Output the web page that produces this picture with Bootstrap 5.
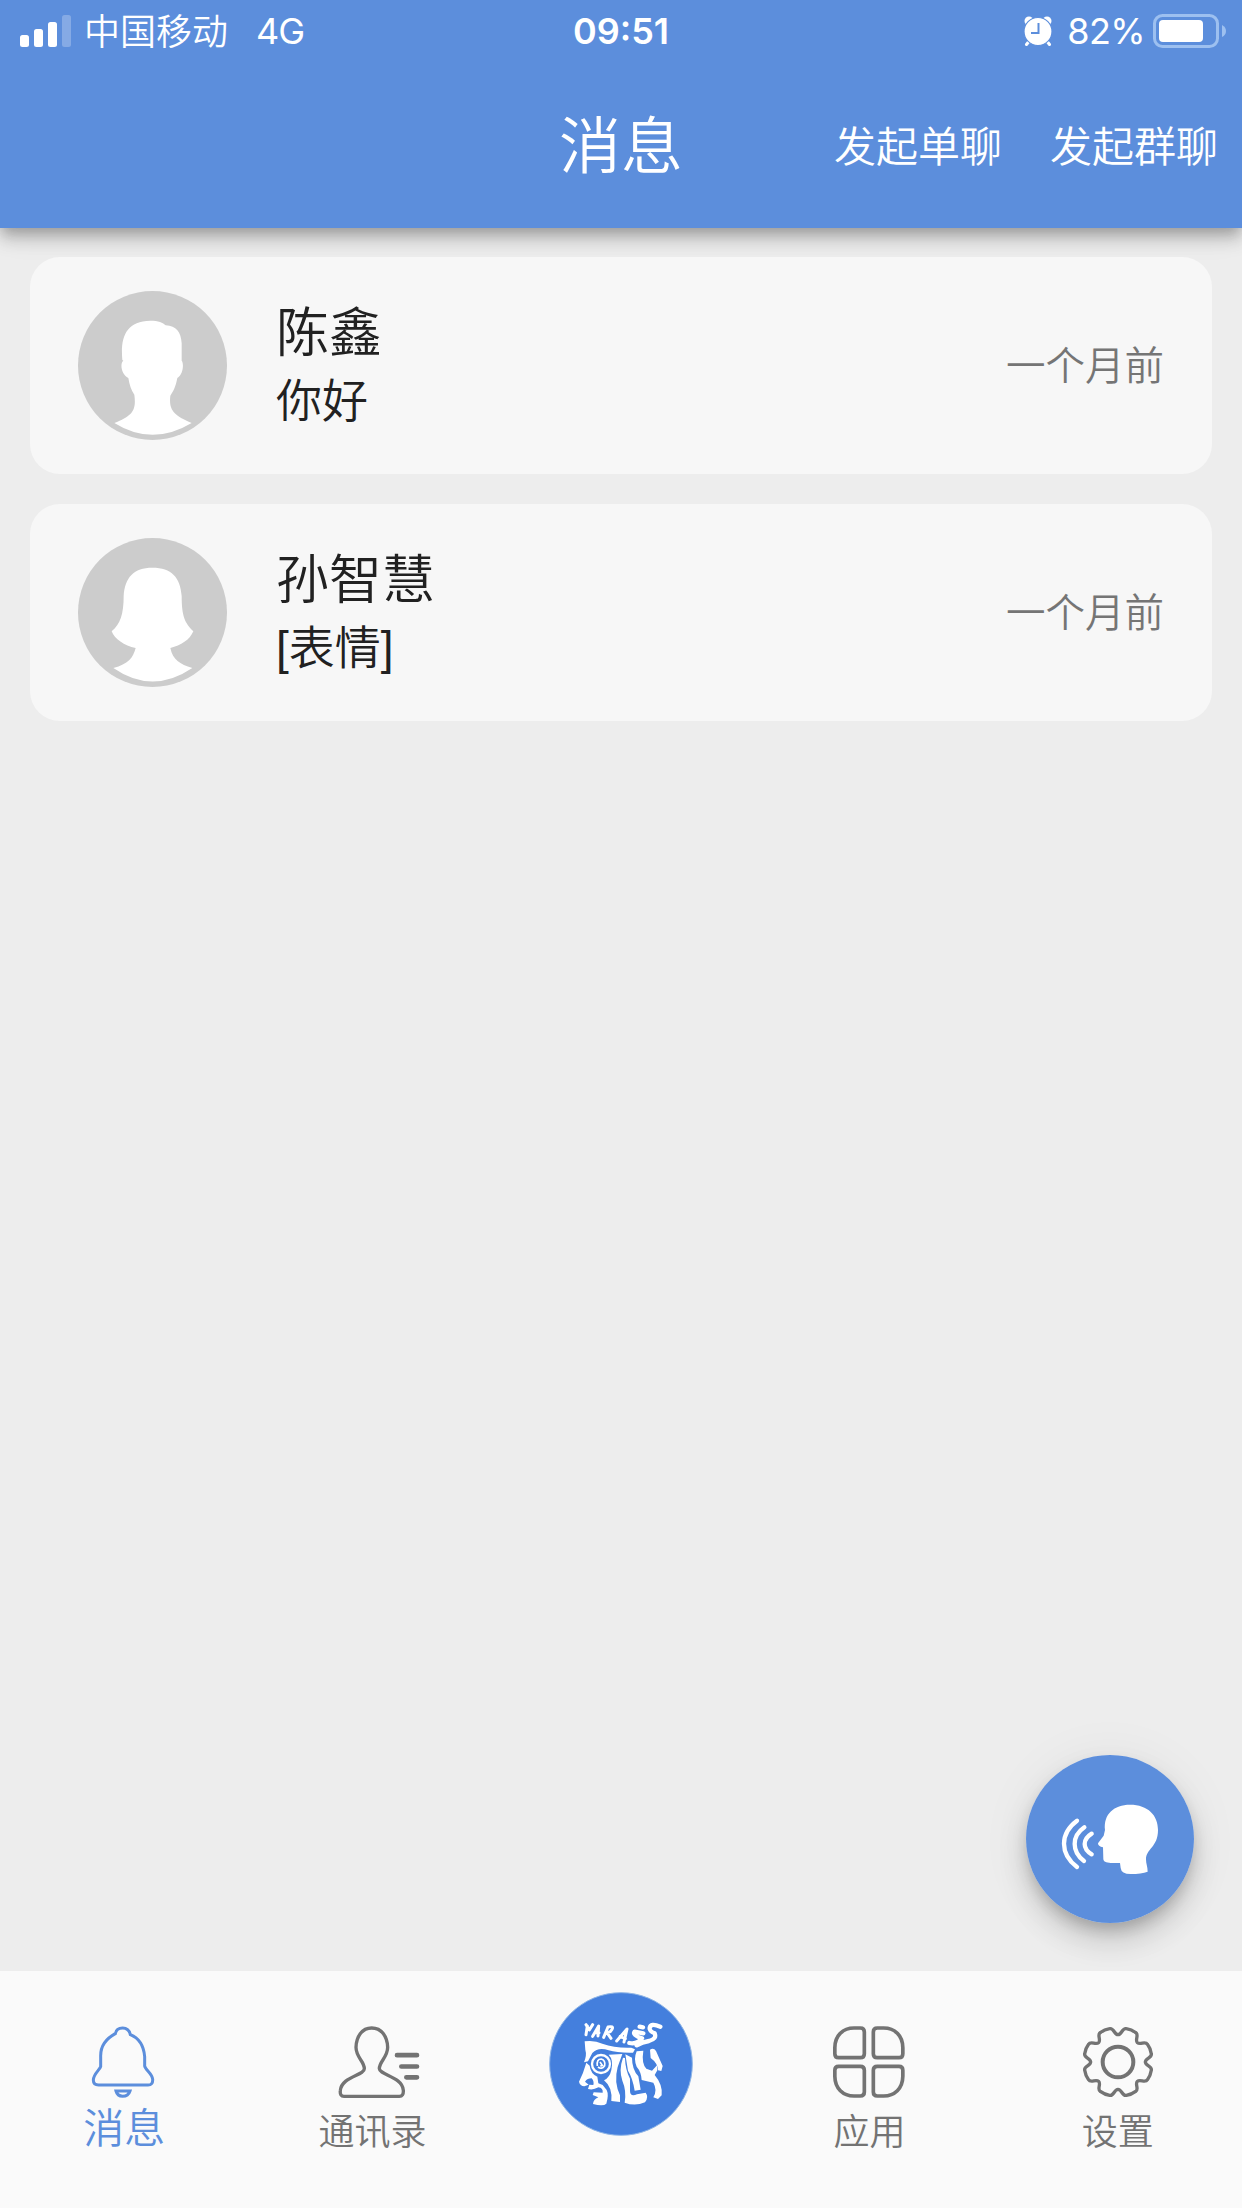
<!DOCTYPE html>
<html lang="zh-CN">
<head>
  <meta charset="UTF-8" />
  <meta name="viewport" content="width=device-width, initial-scale=1.0"/>
  <title>消息</title>
  <link rel="stylesheet" href="https://cdn.jsdelivr.net/npm/bootstrap@5.3.0/dist/css/bootstrap.min.css" />
  <style>
    body {
      font-family: Inter, "Noto Sans CJK SC", sans-serif;
      font-weight: 350;
      background: #ededed;
      color: #212121;
      line-height: 1;
    }
    svg { display: block; flex: none; }

    .app-header {
      height: 228px;
      background: #5c8edc;
      box-shadow: 0 6px 12px -3px rgba(0,0,0,.2), 0 12px 15px rgba(0,0,0,.14), 0 3px 30px rgba(0,0,0,.12);
    }
    .status-bar { height: 62px; padding: 0 15px 0 20px; font-size: 36px; }
    .carrier { margin-left: 13px; padding-top: 2px; }
    .network { margin-left: 28px; font-weight: 400; letter-spacing: -1px; }
    .clock { margin-right: 5px; font-weight: 600; }
    .charge { margin: 0 8px 0 15px; font-weight: 400; letter-spacing: -.6px; }
    .title-bar { height: 166px; padding: 3px 24px 0; }
    .title-text { font-size: 62px; font-weight: 350; line-height: 70px; }
    .action-link { font-size: 42px; }
    .action-group { gap: 48px; }

    .chat-list { padding: 29px 30px; gap: 30px; }
    .chat-card { height: 217px; padding: 0 48px; border: 0; border-radius: 30px; background: #f7f7f7; }
    .chat-text { margin-left: 49px; padding-top: 3px; }
    .chat-name { font-size: 53px; line-height: 68px; }
    .chat-last { font-family: "Liberation Sans", "Noto Sans CJK SC", sans-serif; font-size: 46px; line-height: 68px; }
    .chat-time { padding-top: 3px; font-size: 39.5px; color: #757575; }

    .tab-bar { height: 237px; background: #fafafa; }
    .tab-link { padding-top: 55px; color: #737373; font-size: 36px; }
    .tab-link:hover { color: #737373; }
    .tab-label { margin-top: 16px; line-height: 36px; }
    .tab-link.active { color: #5c8edc; }
    .tab-link.active .tab-label { margin-top: 8px; font-size: 41px; line-height: 44px; }
    .tab-link.active svg { margin-right: 2px; }
    .contacts-icon { margin-left: 13px; }
    .tab-link.tab-logo { padding-top: 21px; }

    .voice-btn {
      right: 48px;
      bottom: 285px;
      border-radius: 50%;
      box-shadow: 0 9px 15px -3px rgba(0,0,0,.2), 0 18px 30px rgba(0,0,0,.14), 0 3px 54px rgba(0,0,0,.06);
    }
  </style>
</head>
<body>
  <div class="d-flex flex-column vh-100 position-relative overflow-hidden">
    <header class="app-header text-white">
      <div class="status-bar d-flex align-items-center">
        <div class="d-flex align-items-center flex-fill w-25">
          <svg width="51" height="32" viewBox="0 0 51 32" fill="#fff">
            <rect x="0" y="20" width="9" height="12" rx="2.5"/>
            <rect x="14" y="14" width="9" height="18" rx="2.5"/>
            <rect x="28" y="7" width="9" height="25" rx="2.5"/>
            <rect x="42" y="0" width="9" height="32" rx="2.5" opacity=".25"/>
          </svg>
          <span class="carrier">中国移动</span>
          <span class="network">4G</span>
        </div>
        <span class="clock">09:51</span>
        <div class="d-flex align-items-center justify-content-end flex-fill w-25">
          <svg width="28" height="30" viewBox="0 0 28 30">
            <circle cx="5" cy="5" r="4.5" fill="#fff"/>
            <circle cx="23" cy="5" r="4.5" fill="#fff"/>
            <path d="M6 24L2.500 28.500M22 24l3.500 4.500" stroke="#fff" stroke-width="3" stroke-linecap="round"/>
            <circle cx="14" cy="15.5" r="14" fill="#fff" stroke="#5c8edc" stroke-width="1.2"/>
            <path d="M14.500 7v10H7" fill="none" stroke="#5c8edc" stroke-width="2"/>
          </svg>
          <span class="charge">82%</span>
          <svg width="74" height="34" viewBox="0 0 74 34">
            <rect x="1.500" y="1.500" width="63" height="31" rx="8" fill="none" stroke="#9dc0f0" stroke-width="3"/>
            <rect x="6" y="6" width="44" height="22" rx="4" fill="#fff"/>
            <path d="M69 11q4 2 4 6t-4 6z" fill="#9dc0f0"/>
          </svg>
        </div>
      </div>
      <div class="title-bar d-flex align-items-center">
        <div class="flex-fill w-25"></div>
        <h1 class="title-text m-0">消息</h1>
        <div class="action-group d-flex justify-content-end flex-fill w-25">
          <span class="action-link text-nowrap">发起单聊</span>
          <span class="action-link text-nowrap">发起群聊</span>
        </div>
      </div>
    </header>

    <main class="chat-list d-flex flex-column flex-fill">
      <div class="chat-card card flex-row align-items-center">
        <svg width="149" height="149" viewBox="175 123 447 447">
          <circle cx="398.500" cy="346.500" r="223.500" fill="#ccc"/>
          <path d="M308 330C302 262 318 214 392 212C416 212 430 218 438 226C470 228 484 246 486 280L486 332C493 340 491 374 473 384C468 410 462 422 452 437C447 480 462 495 516 519Q398 590 284 519C340 497 350 480 344 434C334 420 330 405 326 384C305 374 300 340 311 332Z" fill="#fff"/>
        </svg>
        <div class="chat-text flex-fill">
          <div class="chat-name">陈鑫</div>
          <div class="chat-last">你好</div>
        </div>
        <div class="chat-time">一个月前</div>
      </div>
      <div class="chat-card card flex-row align-items-center">
        <svg width="149" height="149" viewBox="175 126 447 447">
          <circle cx="398.500" cy="349.500" r="223.500" fill="#ccc"/>
          <path d="M398 215C456 215 482 244 486 300C486 362 496 381 521 406C510 432 484 448 452 456C460 492 480 504 518 516Q398 597 281 516C326 504 340 486 348 456C314 450 284 428 276 406C302 384 312 354 312 300C316 244 342 215 398 215Z" fill="#fff"/>
        </svg>
        <div class="chat-text flex-fill">
          <div class="chat-name">孙智慧</div>
          <div class="chat-last">[表情]</div>
        </div>
        <div class="chat-time">一个月前</div>
      </div>
    </main>

    <nav class="tab-bar d-flex">
      <a href="#" class="tab-link active col d-flex flex-column align-items-center text-decoration-none">
        <svg width="64" height="72" viewBox="123 196 192 216" fill="none" stroke="currentColor" stroke-width="9">
          <path d="M218 202C205 202 198 208 196 219C172 232 152 250 152 285V318C150 326 130 341 130 358Q130 373 146 373H294Q309 373 308 356C307 339 286 328 284 316V288C281 252 266 232 241 222C238 208 231 202 218 202Z"/>
          <path d="M198 391H240Q235 407 218 407Q202 406 198 391Z"/>
        </svg>
        <span class="tab-label">消息</span>
      </a>
      <a href="#" class="tab-link col d-flex flex-column align-items-center text-decoration-none">
        <svg class="contacts-icon" width="82" height="72" viewBox="864 196 246 216" fill="none" stroke="currentColor" stroke-width="10" stroke-linecap="round">
          <path d="M965 202C935 202 919 229 918 260C918 290 943 302 943 324C943 344 874 348 871 390Q869 407 882 407H1048Q1061 407 1060 389C1057 348 989 343 988 324C988 302 1013 290 1013 260C1012 229 996 202 965 202Z"/>
          <path d="M1041 283.500H1101M1054 317.500H1101M1069 350H1101" stroke-width="14"/>
        </svg>
        <span class="tab-label">通讯录</span>
      </a>
      <a href="#" class="tab-link tab-logo col d-flex flex-column align-items-center text-decoration-none">
        <svg width="144" height="144" viewBox="57 66 432 432">
          <circle cx="273" cy="282" r="214" fill="#447fdd" stroke="#8eb5e6" stroke-width="3"/>
          <!-- headdress -->
          <g fill="none" stroke="#fff" stroke-width="9" stroke-linecap="round" stroke-linejoin="round">
            <path d="M168 164L178 180L188 164M172 168L168 194M188 199L206 168L204 198M194 188H207"/>
            <path d="M221 202L234 171Q252 167 246 178Q242 187 231 188L243 205"/>
            <path d="M260 213L291 177L282 216M270 200L286 206"/>
            <path d="M298 219Q322 224 336 205Q306 195 314 185L340 190M329 170L339 172M391 170Q361 158 359 174Q358 183 374 190Q381 207 357 213Q336 216 320 226" stroke-width="13"/>
          </g>
          <!-- face -->
          <g fill="#fff">
            <path d="M164 214Q194 210 217 221Q256 235 304 233L315 238L309 248Q262 249 236 241Q205 230 187 249L174 274L162 277Q171 255 166 240Z"/>
            <path d="M169 278Q160 310 147 335Q150 348 163 349L176 344L165 335Q172 325 185 325Q193 334 190 345L178 344L174 357Q190 361 205 352Q220 354 218 368L191 367L188 375L205 382Q190 388 189 402Q220 410 229 401Q237 374 230 360L218 345L205 340L202 320Q182 311 179 287Z"/>
            <path d="M236 254Q251 269 244 300Q239 323 222 331Q248 352 244 393L270 396V376Q251 336 263 291L277 252Z"/>
            <path d="M279 263Q266 299 277 332Q290 362 284 398Q315 410 345 397Q357 381 347 368L321 373Q301 382 300 363V326Q286 300 285 264Z"/>
            <path d="M286 253L306 263Q306 298 325 319L332 359L314 362Q308 324 294 302Z"/>
            <path d="M320 244L340 242Q334 280 349 296L366 302L381 286L382 301L374 315Q399 345 395 376L384 387L370 382Q383 360 370 338L335 330Q334 306 320 290Q310 267 320 244Z"/>
            <path d="M360 239Q371 232 378 243L398 288L394 303L384 301Q383 279 362 264Z"/>
          </g>
          <g fill="none" stroke="#fff">
            <circle cx="213" cy="282" r="27" stroke-width="7"/>
            <path d="M202 288Q199 267 214 267Q227 271 224 287Q215 300 204 291M210 276L217 286L211 289" stroke-width="5"/>
          </g>
        </svg>
      </a>
      <a href="#" class="tab-link col d-flex flex-column align-items-center text-decoration-none">
        <svg width="72" height="72" viewBox="102 166 216 216" fill="none" stroke="currentColor" stroke-width="11">
          <path id="petal" d="M107.500 231C108 194 132 172 165 172H184Q196 172 196 184V249Q196 261 184 261H119Q107.500 261 107.500 249Z"/>
          <use href="#petal" transform="matrix(-1 0 0 1 419 0)"/>
          <use href="#petal" transform="matrix(1 0 0 -1 0 548)"/>
          <use href="#petal" transform="matrix(-1 0 0 -1 419 548)"/>
        </svg>
        <span class="tab-label">应用</span>
      </a>
      <a href="#" class="tab-link col d-flex flex-column align-items-center text-decoration-none">
        <svg width="72" height="72" viewBox="-108 -108 216 216" fill="none" stroke="currentColor" stroke-width="10">
          <circle r="46" stroke-width="12"/>
          <path id="cog" stroke-linejoin="round"/>
        </svg>
        <span class="tab-label">设置</span>
      </a>
    </nav>

    <button type="button" class="voice-btn position-absolute border-0 p-0">
      <svg width="168" height="168" viewBox="138 105 504 504">
        <circle cx="390" cy="357" r="252" fill="#5c8edc"/>
        <path d="M375 330C370 282 402 254 450 254C504 254 534 286 534 330C534 382 498 386 498 418C498 432 503 440 503 455Q484 462 452 462Q424 462 422 444L420 429C400 428 372 433 370 418L369 382Q354 379 354 370L371 347Z" fill="#fff"/>
        <path d="M291 302Q252 331 252 371T291 441M313 322Q284 342 284 372T312 423M335 341Q314 354 314 372T335 403" fill="none" stroke="#fff" stroke-width="13" stroke-linecap="round"/>
      </svg>
    </button>
  </div>

  <script>
    const point = (r, deg) => {
      const a = deg * Math.PI / 180;
      return `${(r * Math.sin(a)).toFixed(1)} ${(-r * Math.cos(a)).toFixed(1)}`;
    };

    // eight teeth, one notch between each pair
    let d = `M${point(82, 0)}`;
    for (let t = 0; t < 360; t += 45) {
      d += `C${point(83, t + 8)} ${point(104, t + 7)} ${point(103, t + 14)}`;
      d += `C${point(104, t + 18)} ${point(104, t + 27)} ${point(103, t + 31)}`;
      d += `C${point(104, t + 38)} ${point(83, t + 37)} ${point(82, t + 45)}`;
    }
    document.getElementById("cog").setAttribute("d", d + "Z");
  </script>
  <script src="https://cdn.jsdelivr.net/npm/bootstrap@5.3.0/dist/js/bootstrap.bundle.min.js"></script>
</body>
</html>
